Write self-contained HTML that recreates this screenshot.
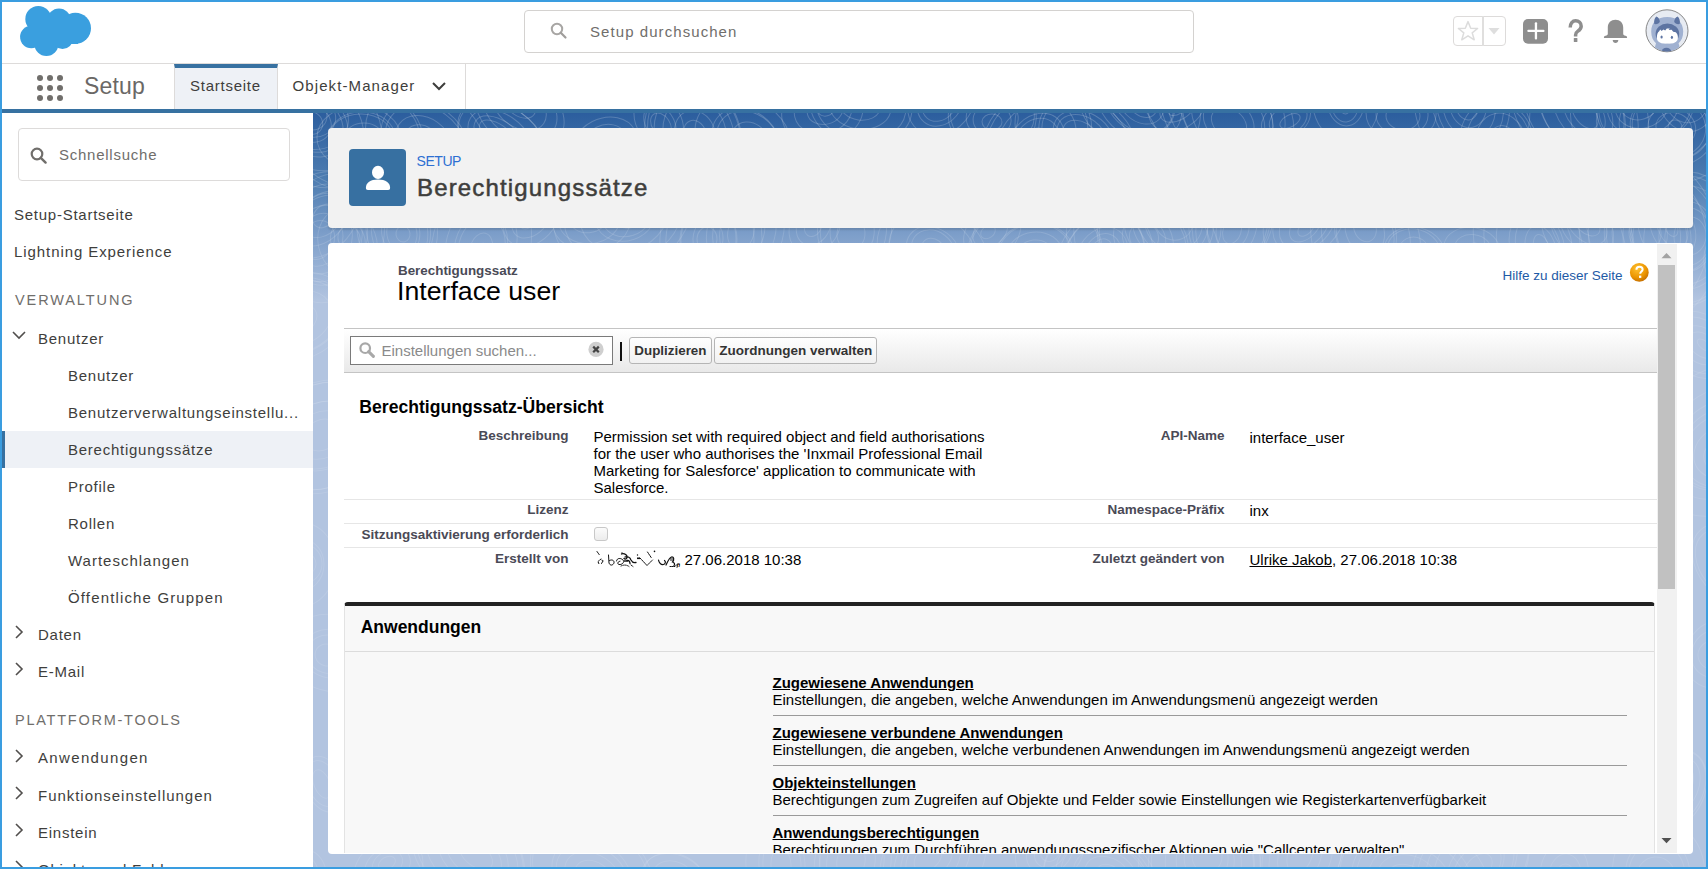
<!DOCTYPE html>
<html><head><meta charset="utf-8">
<style>
*{box-sizing:border-box;margin:0;padding:0}
html,body{width:1708px;height:869px;overflow:hidden;background:#3a9de0;font-family:"Liberation Sans",sans-serif}
.abs{position:absolute}
#hdr{position:absolute;left:2px;top:2px;width:1704px;height:61px;background:#fff}
#hline{position:absolute;left:2px;top:63px;width:1704px;height:1px;background:#dddbda}
#search{position:absolute;left:522px;top:8px;width:670px;height:43px;border:1px solid #d4d2d0;border-radius:4px;background:#fff}
#nav{position:absolute;left:2px;top:64px;width:1704px;height:45px;background:#fff}
#navline{position:absolute;left:2px;top:109px;width:1704px;height:4px;background:#3771a1}
#side{position:absolute;left:2px;top:113px;width:311px;height:754px;background:#fff;overflow:hidden}
#bg{position:absolute;left:313px;top:113px;width:1393px;height:754px;background:linear-gradient(180deg,rgb(44,94,158) 0px,rgb(78,125,177) 67px,rgb(126,159,202) 123px,rgb(178,196,224) 187px,rgb(178,196,224) 760px);overflow:hidden}
.sf{position:absolute;white-space:nowrap;color:#3e3e3c;font-size:15px;line-height:18px}
.si{position:absolute;white-space:nowrap;color:#3e3e3c;font-size:15px;line-height:18px;letter-spacing:0.75px}
.sh{position:absolute;white-space:nowrap;color:#706e6b;font-size:14.5px;line-height:18px;letter-spacing:1.9px}
.chev{position:absolute;width:9px;height:9px;border-right:1.6px solid #514f4d;border-bottom:1.6px solid #514f4d}
.t{position:absolute;white-space:nowrap;line-height:1}
</style></head><body>
<div id="hdr">
 <svg class="abs" style="left:16px;top:2px" width="74" height="52" viewBox="0 0 74 52">
  <g fill="#3a9fdf">
   <circle cx="20.3" cy="15" r="13"/>
   <circle cx="41" cy="16" r="11.5"/>
   <circle cx="57.4" cy="24.3" r="15.6"/>
   <circle cx="13.3" cy="33" r="11.2"/>
   <circle cx="28.4" cy="40" r="12"/>
   <circle cx="44.5" cy="34.5" r="10.5"/>
   <rect x="14" y="14" width="46" height="26"/>
  </g>
 </svg>
 <div id="search">
  <svg class="abs" style="left:25px;top:11px" width="18" height="18" viewBox="0 0 18 18"><circle cx="7" cy="7" r="5.2" fill="none" stroke="#a8a6a4" stroke-width="2"/><line x1="10.8" y1="10.8" x2="15.5" y2="15.5" stroke="#a09e9c" stroke-width="2.2" stroke-linecap="round"/></svg>
  <div class="sf" style="left:65px;top:12px;color:#706e6b;letter-spacing:1.07px">Setup durchsuchen</div>
 </div>

 <div class="abs" style="left:1451px;top:14px;width:53px;height:30px;border:1px solid #dddbda;border-radius:4px"></div>
 <div class="abs" style="left:1480px;top:14px;width:2px;height:30px;background:#e0dfde"></div>
 <svg class="abs" style="left:1454px;top:16px" width="24" height="26" viewBox="0 0 24 26"><polygon points="12,3.6 14.7,10.2 21.6,10.5 16.2,14.8 18.2,21.8 12,17.8 5.8,21.8 7.8,14.8 2.4,10.5 9.3,10.2" fill="none" stroke="#dcdcdc" stroke-width="1.5" stroke-linejoin="round"/></svg>
 <svg class="abs" style="left:1485px;top:23px" width="14" height="10" viewBox="0 0 14 10"><polygon points="1.5,3 12.5,3 7,9.5" fill="#dedede"/></svg>
 <svg class="abs" style="left:1521px;top:17px" width="25" height="25" viewBox="0 0 25 25"><rect x="0" y="0" width="25" height="24.8" rx="5" fill="#8e8e8e"/><rect x="4.3" y="10.8" width="17.2" height="2.3" rx="1" fill="#fff"/><rect x="11.8" y="3.3" width="2.3" height="17.2" rx="1" fill="#fff"/></svg>
 <svg class="abs" style="left:1563px;top:17px" width="22" height="25" viewBox="0 0 22 25"><path d="M5.2 8.4 C5.2 4.4 7.6 1.8 10.6 1.8 C13.8 1.8 16.2 4.2 16.2 7.2 C16.2 10 14.4 11.2 12.6 12.4 C11.2 13.3 10.6 14.2 10.6 16 L10.6 17.4" fill="none" stroke="#8e8e8e" stroke-width="3.5"/><rect x="8.8" y="19.1" width="3.6" height="3.9" rx="0.5" fill="#8e8e8e"/></svg>
 <svg class="abs" style="left:1601px;top:17px" width="26" height="26" viewBox="0 0 26 26"><path d="M12.5 0.8 C8 0.8 4.8 3.8 4.8 8.6 L4.8 15 C4.8 15.8 4 16.3 2.6 16.8 C1.2 17.2 0.9 17.8 0.9 18.4 C0.9 18.9 1.3 19.1 1.8 19.1 L23.2 19.1 C23.7 19.1 24.1 18.9 24.1 18.4 C24.1 17.8 23.8 17.2 22.4 16.8 C21 16.3 20.2 15.8 20.2 15 L20.2 8.6 C20.2 3.8 17 0.8 12.5 0.8 Z" fill="#8e8e8e"/><path d="M9.7 20.9 L15.3 20.9 C15.3 22.6 14 23.9 12.5 23.9 C11 23.9 9.7 22.6 9.7 20.9 Z" fill="#8e8e8e"/></svg>
 <svg class="abs" style="left:1638px;top:2px" width="56" height="56" viewBox="0 0 56 56">
  <defs><clipPath id="avc"><circle cx="27" cy="26.8" r="20.6"/></clipPath></defs>
  <circle cx="27" cy="26.8" r="21" fill="#e7ebf2" stroke="#7a7a7a" stroke-width="0.9"/>
  <g clip-path="url(#avc)">
   <path d="M11.2 27.5 C11.2 18 17.5 13 27.2 13 C36.9 13 43.2 18 43.2 27.5 C43.2 33 41.5 36.5 38.6 39.2 L41.5 50 L13 50 L16 39.2 C13 36.5 11.2 33 11.2 27.5 Z" fill="#a0b1d1"/>
   <path d="M14.2 19.8 C13.8 16.5 14.6 13.6 16.4 12.4 C18.4 13.2 19.8 15.4 19.8 17.8 C19.2 19.6 16 20.8 14.2 19.8 Z" fill="#5d74a2"/>
   <path d="M39.8 19.8 C40.2 16.5 39.4 13.6 37.6 12.4 C35.6 13.2 34.2 15.4 34.2 17.8 C34.8 19.6 38 20.8 39.8 19.8 Z" fill="#5d74a2"/>
   <ellipse cx="27.4" cy="29.8" rx="11.8" ry="10.2" fill="#5d74a2"/>
   <path d="M16.9 34.2 C16.8 30.5 17.6 28.2 19.2 27.2 L20.2 25.6 L21.6 27 L23.4 25.4 L25.2 26.4 L26.8 24.6 L29.8 24.4 L28.6 26 L31.6 25.8 L33.2 27.8 L35.8 28.2 C37.4 29.6 38 31.8 37.9 34.2 C37.6 38.2 33.6 39.8 27.4 39.8 C21.2 39.8 17.1 38.2 16.9 34.2 Z" fill="#fff"/>
   <ellipse cx="21.6" cy="33" rx="1.1" ry="1.6" fill="#5d74a2"/>
   <ellipse cx="31.9" cy="33.3" rx="1.1" ry="1.6" fill="#5d74a2"/>
   <ellipse cx="26.4" cy="48" rx="5" ry="4.2" fill="#5d74a2"/>
  </g>
 </svg>
</div>
<div id="hline"></div>
<div id="nav">
 <svg class="abs" style="left:35px;top:10px" width="28" height="28" viewBox="0 0 28 28"><g fill="#706e6b">
  <circle cx="3" cy="4" r="3"/><circle cx="13" cy="4" r="3"/><circle cx="23" cy="4" r="3"/>
  <circle cx="3" cy="14" r="3"/><circle cx="13" cy="14" r="3"/><circle cx="23" cy="14" r="3"/>
  <circle cx="3" cy="24" r="3"/><circle cx="13" cy="24" r="3"/><circle cx="23" cy="24" r="3"/></g></svg>
 <div class="sf" style="left:82px;top:8px;font-size:23px;line-height:28px;color:#6a6866;letter-spacing:0.2px">Setup</div>
 <div class="abs" style="left:172px;top:0;width:104px;height:45px;background:#eef1f6;border-top:4px solid #3771a1;border-left:1px solid #dddbda;border-right:1px solid #dddbda"></div>
 <div class="si" style="left:188px;top:13px">Startseite</div>
 <div class="si" style="left:290.5px;top:13px;letter-spacing:1.1px">Objekt-Manager</div>
 <svg class="abs" style="left:429px;top:16px" width="16" height="12" viewBox="0 0 16 12"><polyline points="2,3 8,9 14,3" fill="none" stroke="#3e3e3c" stroke-width="2"/></svg>
 <div class="abs" style="left:463px;top:0;width:1px;height:45px;background:#dddbda"></div>
</div>
<div id="navline"></div>
<div id="side">
<div class="abs" style="left:16px;top:15px;width:272px;height:53px;border:1px solid #dddbda;border-radius:4px"></div>
<svg class="abs" style="left:28px;top:34px" width="18" height="18" viewBox="0 0 18 18"><circle cx="7" cy="7" r="5.3" fill="none" stroke="#706e6b" stroke-width="2.2"/><line x1="10.8" y1="10.8" x2="15.6" y2="15.6" stroke="#706e6b" stroke-width="2.4" stroke-linecap="round"/></svg>
<div class="si" style="left:57px;top:32.8px;color:#706e6b">Schnellsuche</div>
<div class="si" style="left:12px;top:92.8px">Setup-Startseite</div>
<div class="si" style="left:12px;top:129.8px;letter-spacing:0.92px">Lightning Experience</div>
<div class="sh" style="left:13px;top:178.0px">VERWALTUNG</div>
<div class="abs" style="left:0;top:318px;width:311px;height:37px;background:#eef1f6"></div>
<div class="abs" style="left:0;top:318px;width:3px;height:37px;background:#3771a1"></div>
<svg class="abs" style="left:9px;top:217px" width="16" height="12" viewBox="0 0 16 12"><polyline points="2,2 8,8 14,2" fill="none" stroke="#514f4d" stroke-width="1.6"/></svg>
<div class="si" style="left:36px;top:216.8px">Benutzer</div>
<div class="si" style="left:66px;top:253.8px">Benutzer</div>
<div class="si" style="left:66px;top:290.8px">Benutzerverwaltungseinstellu...</div>
<div class="si" style="left:66px;top:327.8px">Berechtigungssätze</div>
<div class="si" style="left:66px;top:364.8px">Profile</div>
<div class="si" style="left:66px;top:401.8px">Rollen</div>
<div class="si" style="left:66px;top:438.8px;letter-spacing:1.0px">Warteschlangen</div>
<div class="si" style="left:66px;top:475.8px;letter-spacing:1.15px">Öffentliche Gruppen</div>
<svg class="abs" style="left:11px;top:511.0px" width="12" height="16" viewBox="0 0 12 16"><polyline points="3,2 9,8 3,14" fill="none" stroke="#514f4d" stroke-width="1.6"/></svg>
<div class="si" style="left:36px;top:512.8px">Daten</div>
<svg class="abs" style="left:11px;top:548.0px" width="12" height="16" viewBox="0 0 12 16"><polyline points="3,2 9,8 3,14" fill="none" stroke="#514f4d" stroke-width="1.6"/></svg>
<div class="si" style="left:36px;top:549.8px">E-Mail</div>
<svg class="abs" style="left:11px;top:634.5px" width="12" height="16" viewBox="0 0 12 16"><polyline points="3,2 9,8 3,14" fill="none" stroke="#514f4d" stroke-width="1.6"/></svg>
<div class="si" style="left:36px;top:636.3px;letter-spacing:1.35px">Anwendungen</div>
<svg class="abs" style="left:11px;top:672.0px" width="12" height="16" viewBox="0 0 12 16"><polyline points="3,2 9,8 3,14" fill="none" stroke="#514f4d" stroke-width="1.6"/></svg>
<div class="si" style="left:36px;top:673.8px;letter-spacing:0.97px">Funktionseinstellungen</div>
<svg class="abs" style="left:11px;top:709.0px" width="12" height="16" viewBox="0 0 12 16"><polyline points="3,2 9,8 3,14" fill="none" stroke="#514f4d" stroke-width="1.6"/></svg>
<div class="si" style="left:36px;top:710.8px">Einstein</div>
<svg class="abs" style="left:11px;top:746.0px" width="12" height="16" viewBox="0 0 12 16"><polyline points="3,2 9,8 3,14" fill="none" stroke="#514f4d" stroke-width="1.6"/></svg>
<div class="si" style="left:36px;top:747.8px">Objekte und Felder</div>
<div class="sh" style="left:13px;top:598.0px;letter-spacing:1.75px">PLATTFORM-TOOLS</div>
</div>
<div id="bg"><svg class="abs" style="left:0;top:0;-webkit-mask-image:linear-gradient(#000 0px,rgba(0,0,0,0.5) 190px)" width="1393" height="754" viewBox="0 0 1393 754"><g fill="none" stroke="rgba(255,255,255,0.2)" stroke-width="1"><ellipse cx="-2" cy="10" rx="12" ry="11" transform="rotate(34 -2 10)"/><ellipse cx="-1" cy="10" rx="20" ry="18" transform="rotate(34 -2 10)"/><ellipse cx="1" cy="10" rx="31" ry="26" transform="rotate(34 -2 10)"/><ellipse cx="2" cy="10" rx="35" ry="30" transform="rotate(34 -2 10)"/><ellipse cx="3" cy="10" rx="51" ry="42" transform="rotate(34 -2 10)"/><ellipse cx="4" cy="10" rx="70" ry="57" transform="rotate(34 -2 10)"/><ellipse cx="5" cy="127" rx="20" ry="16" transform="rotate(111 5 127)"/><ellipse cx="4" cy="125" rx="27" ry="22" transform="rotate(111 5 127)"/><ellipse cx="3" cy="123" rx="35" ry="29" transform="rotate(111 5 127)"/><ellipse cx="1" cy="121" rx="44" ry="36" transform="rotate(111 5 127)"/><ellipse cx="-0" cy="119" rx="48" ry="39" transform="rotate(111 5 127)"/><ellipse cx="-1" cy="117" rx="66" ry="53" transform="rotate(111 5 127)"/><ellipse cx="53" cy="23" rx="9" ry="6" transform="rotate(1 53 23)"/><ellipse cx="51" cy="24" rx="19" ry="14" transform="rotate(1 53 23)"/><ellipse cx="49" cy="24" rx="33" ry="25" transform="rotate(1 53 23)"/><ellipse cx="48" cy="25" rx="32" ry="24" transform="rotate(1 53 23)"/><ellipse cx="46" cy="25" rx="42" ry="32" transform="rotate(1 53 23)"/><ellipse cx="44" cy="26" rx="63" ry="49" transform="rotate(1 53 23)"/><ellipse cx="43" cy="27" rx="67" ry="52" transform="rotate(1 53 23)"/><ellipse cx="36" cy="125" rx="12" ry="11" transform="rotate(70 36 125)"/><ellipse cx="38" cy="127" rx="20" ry="17" transform="rotate(70 36 125)"/><ellipse cx="40" cy="128" rx="35" ry="29" transform="rotate(70 36 125)"/><ellipse cx="109" cy="29" rx="12" ry="9" transform="rotate(36 109 29)"/><ellipse cx="109" cy="28" rx="19" ry="15" transform="rotate(36 109 29)"/><ellipse cx="110" cy="28" rx="30" ry="24" transform="rotate(36 109 29)"/><ellipse cx="111" cy="27" rx="47" ry="37" transform="rotate(36 109 29)"/><ellipse cx="112" cy="27" rx="43" ry="34" transform="rotate(36 109 29)"/><ellipse cx="112" cy="26" rx="65" ry="51" transform="rotate(36 109 29)"/><ellipse cx="90" cy="121" rx="8" ry="7" transform="rotate(81 90 121)"/><ellipse cx="89" cy="122" rx="19" ry="15" transform="rotate(81 90 121)"/><ellipse cx="88" cy="123" rx="24" ry="19" transform="rotate(81 90 121)"/><ellipse cx="87" cy="124" rx="36" ry="28" transform="rotate(81 90 121)"/><ellipse cx="85" cy="125" rx="41" ry="32" transform="rotate(81 90 121)"/><ellipse cx="84" cy="126" rx="50" ry="40" transform="rotate(81 90 121)"/><ellipse cx="184" cy="21" rx="20" ry="10" transform="rotate(34 184 21)"/><ellipse cx="186" cy="22" rx="27" ry="16" transform="rotate(34 184 21)"/><ellipse cx="188" cy="22" rx="35" ry="23" transform="rotate(34 184 21)"/><ellipse cx="190" cy="22" rx="48" ry="32" transform="rotate(34 184 21)"/><ellipse cx="192" cy="23" rx="48" ry="33" transform="rotate(34 184 21)"/><ellipse cx="169" cy="137" rx="7" ry="4" transform="rotate(105 169 137)"/><ellipse cx="168" cy="138" rx="16" ry="11" transform="rotate(105 169 137)"/><ellipse cx="167" cy="138" rx="31" ry="23" transform="rotate(105 169 137)"/><ellipse cx="166" cy="139" rx="35" ry="26" transform="rotate(105 169 137)"/><ellipse cx="165" cy="139" rx="47" ry="35" transform="rotate(105 169 137)"/><ellipse cx="164" cy="139" rx="64" ry="49" transform="rotate(105 169 137)"/><ellipse cx="207" cy="-8" rx="17" ry="11" transform="rotate(34 207 -8)"/><ellipse cx="208" cy="-6" rx="29" ry="20" transform="rotate(34 207 -8)"/><ellipse cx="209" cy="-5" rx="40" ry="29" transform="rotate(34 207 -8)"/><ellipse cx="210" cy="-3" rx="48" ry="35" transform="rotate(34 207 -8)"/><ellipse cx="217" cy="105" rx="13" ry="8" transform="rotate(133 217 105)"/><ellipse cx="216" cy="104" rx="23" ry="16" transform="rotate(133 217 105)"/><ellipse cx="216" cy="104" rx="32" ry="24" transform="rotate(133 217 105)"/><ellipse cx="292" cy="29" rx="9" ry="7" transform="rotate(153 292 29)"/><ellipse cx="293" cy="28" rx="17" ry="14" transform="rotate(153 292 29)"/><ellipse cx="293" cy="27" rx="23" ry="19" transform="rotate(153 292 29)"/><ellipse cx="294" cy="26" rx="34" ry="27" transform="rotate(153 292 29)"/><ellipse cx="273" cy="103" rx="10" ry="8" transform="rotate(175 273 103)"/><ellipse cx="271" cy="101" rx="19" ry="15" transform="rotate(175 273 103)"/><ellipse cx="270" cy="100" rx="31" ry="25" transform="rotate(175 273 103)"/><ellipse cx="268" cy="98" rx="39" ry="31" transform="rotate(175 273 103)"/><ellipse cx="348" cy="12" rx="13" ry="9" transform="rotate(56 348 12)"/><ellipse cx="346" cy="12" rx="20" ry="14" transform="rotate(56 348 12)"/><ellipse cx="344" cy="12" rx="30" ry="22" transform="rotate(56 348 12)"/><ellipse cx="315" cy="103" rx="14" ry="12" transform="rotate(162 315 103)"/><ellipse cx="316" cy="104" rx="25" ry="21" transform="rotate(162 315 103)"/><ellipse cx="317" cy="105" rx="31" ry="26" transform="rotate(162 315 103)"/><ellipse cx="318" cy="106" rx="45" ry="37" transform="rotate(162 315 103)"/><ellipse cx="319" cy="107" rx="60" ry="49" transform="rotate(162 315 103)"/><ellipse cx="320" cy="107" rx="70" ry="57" transform="rotate(162 315 103)"/><ellipse cx="382" cy="21" rx="14" ry="11" transform="rotate(69 382 21)"/><ellipse cx="382" cy="21" rx="24" ry="20" transform="rotate(69 382 21)"/><ellipse cx="382" cy="21" rx="38" ry="31" transform="rotate(69 382 21)"/><ellipse cx="383" cy="22" rx="48" ry="39" transform="rotate(69 382 21)"/><ellipse cx="383" cy="22" rx="57" ry="45" transform="rotate(69 382 21)"/><ellipse cx="383" cy="23" rx="59" ry="47" transform="rotate(69 382 21)"/><ellipse cx="394" cy="126" rx="12" ry="10" transform="rotate(93 394 126)"/><ellipse cx="394" cy="125" rx="20" ry="15" transform="rotate(93 394 126)"/><ellipse cx="395" cy="125" rx="36" ry="28" transform="rotate(93 394 126)"/><ellipse cx="395" cy="124" rx="35" ry="28" transform="rotate(93 394 126)"/><ellipse cx="395" cy="123" rx="56" ry="44" transform="rotate(93 394 126)"/><ellipse cx="395" cy="122" rx="64" ry="51" transform="rotate(93 394 126)"/><ellipse cx="439" cy="25" rx="10" ry="9" transform="rotate(36 439 25)"/><ellipse cx="438" cy="27" rx="19" ry="16" transform="rotate(36 439 25)"/><ellipse cx="437" cy="29" rx="33" ry="27" transform="rotate(36 439 25)"/><ellipse cx="435" cy="30" rx="36" ry="29" transform="rotate(36 439 25)"/><ellipse cx="434" cy="32" rx="52" ry="42" transform="rotate(36 439 25)"/><ellipse cx="428" cy="119" rx="18" ry="13" transform="rotate(105 428 119)"/><ellipse cx="427" cy="118" rx="30" ry="22" transform="rotate(105 428 119)"/><ellipse cx="426" cy="116" rx="41" ry="31" transform="rotate(105 428 119)"/><ellipse cx="426" cy="115" rx="50" ry="38" transform="rotate(105 428 119)"/><ellipse cx="513" cy="-3" rx="8" ry="6" transform="rotate(167 513 -3)"/><ellipse cx="514" cy="-3" rx="18" ry="14" transform="rotate(167 513 -3)"/><ellipse cx="516" cy="-3" rx="29" ry="23" transform="rotate(167 513 -3)"/><ellipse cx="517" cy="-4" rx="41" ry="32" transform="rotate(167 513 -3)"/><ellipse cx="500" cy="114" rx="10" ry="8" transform="rotate(122 500 114)"/><ellipse cx="499" cy="114" rx="20" ry="16" transform="rotate(122 500 114)"/><ellipse cx="498" cy="113" rx="30" ry="24" transform="rotate(122 500 114)"/><ellipse cx="546" cy="-6" rx="9" ry="5" transform="rotate(8 546 -6)"/><ellipse cx="547" cy="-7" rx="20" ry="14" transform="rotate(8 546 -6)"/><ellipse cx="547" cy="-7" rx="31" ry="23" transform="rotate(8 546 -6)"/><ellipse cx="548" cy="-7" rx="45" ry="34" transform="rotate(8 546 -6)"/><ellipse cx="548" cy="-7" rx="51" ry="39" transform="rotate(8 546 -6)"/><ellipse cx="538" cy="121" rx="16" ry="14" transform="rotate(96 538 121)"/><ellipse cx="536" cy="120" rx="26" ry="22" transform="rotate(96 538 121)"/><ellipse cx="534" cy="119" rx="39" ry="33" transform="rotate(96 538 121)"/><ellipse cx="532" cy="118" rx="45" ry="37" transform="rotate(96 538 121)"/><ellipse cx="625" cy="-8" rx="7" ry="7" transform="rotate(130 625 -8)"/><ellipse cx="623" cy="-8" rx="19" ry="16" transform="rotate(130 625 -8)"/><ellipse cx="622" cy="-8" rx="25" ry="21" transform="rotate(130 625 -8)"/><ellipse cx="620" cy="-8" rx="37" ry="31" transform="rotate(130 625 -8)"/><ellipse cx="620" cy="136" rx="12" ry="10" transform="rotate(37 620 136)"/><ellipse cx="621" cy="137" rx="23" ry="19" transform="rotate(37 620 136)"/><ellipse cx="622" cy="138" rx="29" ry="23" transform="rotate(37 620 136)"/><ellipse cx="623" cy="140" rx="47" ry="38" transform="rotate(37 620 136)"/><ellipse cx="624" cy="141" rx="60" ry="48" transform="rotate(37 620 136)"/><ellipse cx="679" cy="9" rx="10" ry="8" transform="rotate(3 679 9)"/><ellipse cx="679" cy="7" rx="19" ry="16" transform="rotate(3 679 9)"/><ellipse cx="679" cy="5" rx="26" ry="22" transform="rotate(3 679 9)"/><ellipse cx="679" cy="4" rx="44" ry="36" transform="rotate(3 679 9)"/><ellipse cx="679" cy="2" rx="42" ry="34" transform="rotate(3 679 9)"/><ellipse cx="675" cy="119" rx="8" ry="6" transform="rotate(142 675 119)"/><ellipse cx="673" cy="118" rx="19" ry="14" transform="rotate(142 675 119)"/><ellipse cx="672" cy="116" rx="31" ry="24" transform="rotate(142 675 119)"/><ellipse cx="723" cy="28" rx="14" ry="12" transform="rotate(136 723 28)"/><ellipse cx="722" cy="28" rx="24" ry="20" transform="rotate(136 723 28)"/><ellipse cx="722" cy="28" rx="30" ry="24" transform="rotate(136 723 28)"/><ellipse cx="722" cy="28" rx="43" ry="35" transform="rotate(136 723 28)"/><ellipse cx="722" cy="28" rx="60" ry="49" transform="rotate(136 723 28)"/><ellipse cx="721" cy="29" rx="56" ry="45" transform="rotate(136 723 28)"/><ellipse cx="722" cy="143" rx="9" ry="8" transform="rotate(174 722 143)"/><ellipse cx="722" cy="143" rx="19" ry="16" transform="rotate(174 722 143)"/><ellipse cx="722" cy="144" rx="28" ry="23" transform="rotate(174 722 143)"/><ellipse cx="722" cy="144" rx="39" ry="32" transform="rotate(174 722 143)"/><ellipse cx="722" cy="144" rx="37" ry="31" transform="rotate(174 722 143)"/><ellipse cx="722" cy="144" rx="68" ry="56" transform="rotate(174 722 143)"/><ellipse cx="722" cy="145" rx="66" ry="54" transform="rotate(174 722 143)"/><ellipse cx="766" cy="21" rx="8" ry="4" transform="rotate(30 766 21)"/><ellipse cx="768" cy="21" rx="19" ry="13" transform="rotate(30 766 21)"/><ellipse cx="769" cy="21" rx="26" ry="19" transform="rotate(30 766 21)"/><ellipse cx="771" cy="21" rx="32" ry="24" transform="rotate(30 766 21)"/><ellipse cx="773" cy="20" rx="46" ry="35" transform="rotate(30 766 21)"/><ellipse cx="775" cy="20" rx="51" ry="39" transform="rotate(30 766 21)"/><ellipse cx="776" cy="20" rx="77" ry="59" transform="rotate(30 766 21)"/><ellipse cx="787" cy="141" rx="10" ry="6" transform="rotate(111 787 141)"/><ellipse cx="789" cy="140" rx="18" ry="12" transform="rotate(111 787 141)"/><ellipse cx="791" cy="138" rx="26" ry="19" transform="rotate(111 787 141)"/><ellipse cx="793" cy="137" rx="35" ry="26" transform="rotate(111 787 141)"/><ellipse cx="794" cy="135" rx="52" ry="40" transform="rotate(111 787 141)"/><ellipse cx="796" cy="134" rx="53" ry="41" transform="rotate(111 787 141)"/><ellipse cx="798" cy="133" rx="63" ry="48" transform="rotate(111 787 141)"/><ellipse cx="830" cy="-10" rx="8" ry="6" transform="rotate(45 830 -10)"/><ellipse cx="829" cy="-10" rx="17" ry="13" transform="rotate(45 830 -10)"/><ellipse cx="827" cy="-10" rx="26" ry="20" transform="rotate(45 830 -10)"/><ellipse cx="826" cy="-10" rx="37" ry="29" transform="rotate(45 830 -10)"/><ellipse cx="825" cy="-10" rx="39" ry="31" transform="rotate(45 830 -10)"/><ellipse cx="824" cy="-10" rx="48" ry="38" transform="rotate(45 830 -10)"/><ellipse cx="823" cy="-10" rx="69" ry="55" transform="rotate(45 830 -10)"/><ellipse cx="831" cy="124" rx="15" ry="14" transform="rotate(42 831 124)"/><ellipse cx="832" cy="125" rx="23" ry="20" transform="rotate(42 831 124)"/><ellipse cx="832" cy="126" rx="32" ry="27" transform="rotate(42 831 124)"/><ellipse cx="833" cy="128" rx="49" ry="41" transform="rotate(42 831 124)"/><ellipse cx="834" cy="129" rx="47" ry="39" transform="rotate(42 831 124)"/><ellipse cx="835" cy="130" rx="75" ry="61" transform="rotate(42 831 124)"/><ellipse cx="836" cy="131" rx="83" ry="68" transform="rotate(42 831 124)"/><ellipse cx="865" cy="-4" rx="10" ry="5" transform="rotate(150 865 -4)"/><ellipse cx="865" cy="-3" rx="19" ry="12" transform="rotate(150 865 -4)"/><ellipse cx="865" cy="-2" rx="30" ry="22" transform="rotate(150 865 -4)"/><ellipse cx="861" cy="109" rx="19" ry="18" transform="rotate(21 861 109)"/><ellipse cx="861" cy="110" rx="29" ry="27" transform="rotate(21 861 109)"/><ellipse cx="861" cy="111" rx="35" ry="31" transform="rotate(21 861 109)"/><ellipse cx="861" cy="112" rx="41" ry="36" transform="rotate(21 861 109)"/><ellipse cx="861" cy="113" rx="49" ry="43" transform="rotate(21 861 109)"/><ellipse cx="916" cy="10" rx="19" ry="14" transform="rotate(34 916 10)"/><ellipse cx="915" cy="9" rx="27" ry="21" transform="rotate(34 916 10)"/><ellipse cx="913" cy="7" rx="39" ry="30" transform="rotate(34 916 10)"/><ellipse cx="912" cy="6" rx="48" ry="38" transform="rotate(34 916 10)"/><ellipse cx="910" cy="5" rx="49" ry="38" transform="rotate(34 916 10)"/><ellipse cx="909" cy="3" rx="71" ry="55" transform="rotate(34 916 10)"/><ellipse cx="907" cy="2" rx="63" ry="49" transform="rotate(34 916 10)"/><ellipse cx="919" cy="118" rx="13" ry="9" transform="rotate(108 919 118)"/><ellipse cx="917" cy="118" rx="21" ry="16" transform="rotate(108 919 118)"/><ellipse cx="915" cy="119" rx="32" ry="24" transform="rotate(108 919 118)"/><ellipse cx="913" cy="120" rx="45" ry="35" transform="rotate(108 919 118)"/><ellipse cx="911" cy="121" rx="49" ry="38" transform="rotate(108 919 118)"/><ellipse cx="909" cy="122" rx="53" ry="41" transform="rotate(108 919 118)"/><ellipse cx="977" cy="8" rx="11" ry="6" transform="rotate(152 977 8)"/><ellipse cx="978" cy="10" rx="20" ry="14" transform="rotate(152 977 8)"/><ellipse cx="980" cy="11" rx="26" ry="18" transform="rotate(152 977 8)"/><ellipse cx="993" cy="115" rx="10" ry="6" transform="rotate(134 993 115)"/><ellipse cx="992" cy="117" rx="19" ry="12" transform="rotate(134 993 115)"/><ellipse cx="991" cy="119" rx="29" ry="21" transform="rotate(134 993 115)"/><ellipse cx="989" cy="121" rx="36" ry="27" transform="rotate(134 993 115)"/><ellipse cx="988" cy="122" rx="47" ry="35" transform="rotate(134 993 115)"/><ellipse cx="1032" cy="-6" rx="7" ry="5" transform="rotate(84 1032 -6)"/><ellipse cx="1030" cy="-6" rx="17" ry="13" transform="rotate(84 1032 -6)"/><ellipse cx="1028" cy="-7" rx="23" ry="18" transform="rotate(84 1032 -6)"/><ellipse cx="1026" cy="-7" rx="42" ry="33" transform="rotate(84 1032 -6)"/><ellipse cx="1052" cy="115" rx="14" ry="11" transform="rotate(70 1052 115)"/><ellipse cx="1054" cy="116" rx="25" ry="19" transform="rotate(70 1052 115)"/><ellipse cx="1056" cy="116" rx="38" ry="30" transform="rotate(70 1052 115)"/><ellipse cx="1058" cy="117" rx="35" ry="28" transform="rotate(70 1052 115)"/><ellipse cx="1060" cy="117" rx="54" ry="43" transform="rotate(70 1052 115)"/><ellipse cx="1062" cy="118" rx="67" ry="53" transform="rotate(70 1052 115)"/><ellipse cx="1090" cy="3" rx="17" ry="14" transform="rotate(2 1090 3)"/><ellipse cx="1089" cy="2" rx="26" ry="21" transform="rotate(2 1090 3)"/><ellipse cx="1088" cy="1" rx="35" ry="28" transform="rotate(2 1090 3)"/><ellipse cx="1101" cy="138" rx="15" ry="14" transform="rotate(14 1101 138)"/><ellipse cx="1101" cy="139" rx="27" ry="23" transform="rotate(14 1101 138)"/><ellipse cx="1102" cy="140" rx="31" ry="26" transform="rotate(14 1101 138)"/><ellipse cx="1154" cy="-7" rx="14" ry="11" transform="rotate(77 1154 -7)"/><ellipse cx="1154" cy="-8" rx="22" ry="18" transform="rotate(77 1154 -7)"/><ellipse cx="1154" cy="-9" rx="33" ry="26" transform="rotate(77 1154 -7)"/><ellipse cx="1154" cy="-10" rx="42" ry="33" transform="rotate(77 1154 -7)"/><ellipse cx="1154" cy="-11" rx="47" ry="38" transform="rotate(77 1154 -7)"/><ellipse cx="1154" cy="-12" rx="72" ry="57" transform="rotate(77 1154 -7)"/><ellipse cx="1162" cy="134" rx="6" ry="4" transform="rotate(8 1162 134)"/><ellipse cx="1160" cy="135" rx="18" ry="13" transform="rotate(8 1162 134)"/><ellipse cx="1159" cy="136" rx="28" ry="21" transform="rotate(8 1162 134)"/><ellipse cx="1192" cy="29" rx="7" ry="7" transform="rotate(77 1192 29)"/><ellipse cx="1192" cy="31" rx="17" ry="14" transform="rotate(77 1192 29)"/><ellipse cx="1192" cy="33" rx="30" ry="25" transform="rotate(77 1192 29)"/><ellipse cx="1192" cy="35" rx="39" ry="32" transform="rotate(77 1192 29)"/><ellipse cx="1192" cy="37" rx="44" ry="37" transform="rotate(77 1192 29)"/><ellipse cx="1229" cy="137" rx="16" ry="8" transform="rotate(75 1229 137)"/><ellipse cx="1228" cy="138" rx="24" ry="15" transform="rotate(75 1229 137)"/><ellipse cx="1226" cy="140" rx="34" ry="22" transform="rotate(75 1229 137)"/><ellipse cx="1225" cy="141" rx="39" ry="27" transform="rotate(75 1229 137)"/><ellipse cx="1223" cy="143" rx="52" ry="37" transform="rotate(75 1229 137)"/><ellipse cx="1222" cy="144" rx="66" ry="48" transform="rotate(75 1229 137)"/><ellipse cx="1220" cy="145" rx="77" ry="57" transform="rotate(75 1229 137)"/><ellipse cx="1272" cy="1" rx="17" ry="10" transform="rotate(52 1272 1)"/><ellipse cx="1271" cy="1" rx="26" ry="17" transform="rotate(52 1272 1)"/><ellipse cx="1269" cy="1" rx="36" ry="25" transform="rotate(52 1272 1)"/><ellipse cx="1268" cy="1" rx="51" ry="37" transform="rotate(52 1272 1)"/><ellipse cx="1266" cy="1" rx="51" ry="37" transform="rotate(52 1272 1)"/><ellipse cx="1265" cy="1" rx="68" ry="50" transform="rotate(52 1272 1)"/><ellipse cx="1263" cy="1" rx="81" ry="61" transform="rotate(52 1272 1)"/><ellipse cx="1273" cy="109" rx="17" ry="10" transform="rotate(45 1273 109)"/><ellipse cx="1275" cy="110" rx="24" ry="16" transform="rotate(45 1273 109)"/><ellipse cx="1277" cy="112" rx="31" ry="22" transform="rotate(45 1273 109)"/><ellipse cx="1279" cy="114" rx="42" ry="30" transform="rotate(45 1273 109)"/><ellipse cx="1281" cy="115" rx="53" ry="39" transform="rotate(45 1273 109)"/><ellipse cx="1325" cy="-10" rx="10" ry="9" transform="rotate(164 1325 -10)"/><ellipse cx="1324" cy="-11" rx="19" ry="16" transform="rotate(164 1325 -10)"/><ellipse cx="1322" cy="-13" rx="27" ry="23" transform="rotate(164 1325 -10)"/><ellipse cx="1321" cy="-14" rx="36" ry="30" transform="rotate(164 1325 -10)"/><ellipse cx="1320" cy="-15" rx="48" ry="39" transform="rotate(164 1325 -10)"/><ellipse cx="1318" cy="-16" rx="48" ry="39" transform="rotate(164 1325 -10)"/><ellipse cx="1317" cy="-17" rx="78" ry="63" transform="rotate(164 1325 -10)"/><ellipse cx="1332" cy="120" rx="18" ry="16" transform="rotate(80 1332 120)"/><ellipse cx="1333" cy="120" rx="25" ry="22" transform="rotate(80 1332 120)"/><ellipse cx="1334" cy="119" rx="40" ry="34" transform="rotate(80 1332 120)"/><ellipse cx="1335" cy="119" rx="48" ry="40" transform="rotate(80 1332 120)"/><ellipse cx="1336" cy="118" rx="52" ry="43" transform="rotate(80 1332 120)"/><ellipse cx="1337" cy="118" rx="72" ry="59" transform="rotate(80 1332 120)"/><ellipse cx="1338" cy="117" rx="85" ry="69" transform="rotate(80 1332 120)"/><ellipse cx="1362" cy="14" rx="7" ry="7" transform="rotate(14 1362 14)"/><ellipse cx="1361" cy="15" rx="18" ry="15" transform="rotate(14 1362 14)"/><ellipse cx="1359" cy="15" rx="24" ry="20" transform="rotate(14 1362 14)"/><ellipse cx="1357" cy="15" rx="40" ry="33" transform="rotate(14 1362 14)"/><ellipse cx="1356" cy="15" rx="37" ry="31" transform="rotate(14 1362 14)"/><ellipse cx="1354" cy="16" rx="48" ry="39" transform="rotate(14 1362 14)"/><ellipse cx="1352" cy="16" rx="69" ry="56" transform="rotate(14 1362 14)"/><ellipse cx="1358" cy="114" rx="10" ry="6" transform="rotate(64 1358 114)"/><ellipse cx="1359" cy="113" rx="21" ry="14" transform="rotate(64 1358 114)"/><ellipse cx="1360" cy="113" rx="30" ry="21" transform="rotate(64 1358 114)"/><ellipse cx="1361" cy="112" rx="45" ry="34" transform="rotate(64 1358 114)"/><ellipse cx="1362" cy="112" rx="57" ry="43" transform="rotate(64 1358 114)"/><ellipse cx="1447" cy="5" rx="12" ry="8" transform="rotate(174 1447 5)"/><ellipse cx="1447" cy="5" rx="24" ry="16" transform="rotate(174 1447 5)"/><ellipse cx="1448" cy="5" rx="27" ry="19" transform="rotate(174 1447 5)"/><ellipse cx="1449" cy="5" rx="44" ry="33" transform="rotate(174 1447 5)"/><ellipse cx="1450" cy="5" rx="52" ry="39" transform="rotate(174 1447 5)"/><ellipse cx="1442" cy="133" rx="17" ry="13" transform="rotate(151 1442 133)"/><ellipse cx="1442" cy="132" rx="29" ry="22" transform="rotate(151 1442 133)"/><ellipse cx="1442" cy="131" rx="34" ry="27" transform="rotate(151 1442 133)"/><ellipse cx="1443" cy="129" rx="38" ry="30" transform="rotate(151 1442 133)"/><ellipse cx="1443" cy="128" rx="55" ry="44" transform="rotate(151 1442 133)"/><ellipse cx="-1" cy="3" rx="15" ry="14" transform="rotate(12 -1 3)"/><ellipse cx="-0" cy="4" rx="23" ry="20" transform="rotate(12 -1 3)"/><ellipse cx="-0" cy="5" rx="36" ry="31" transform="rotate(12 -1 3)"/><ellipse cx="1373" cy="-17" rx="7" ry="7" transform="rotate(76 1373 -17)"/><ellipse cx="1373" cy="-17" rx="16" ry="14" transform="rotate(76 1373 -17)"/><ellipse cx="1374" cy="-17" rx="26" ry="22" transform="rotate(76 1373 -17)"/><ellipse cx="1375" cy="-17" rx="34" ry="28" transform="rotate(76 1373 -17)"/><ellipse cx="11" cy="103" rx="13" ry="10" transform="rotate(130 11 103)"/><ellipse cx="12" cy="105" rx="24" ry="19" transform="rotate(130 11 103)"/><ellipse cx="13" cy="107" rx="34" ry="26" transform="rotate(130 11 103)"/><ellipse cx="14" cy="108" rx="47" ry="37" transform="rotate(130 11 103)"/><ellipse cx="1377" cy="123" rx="19" ry="16" transform="rotate(94 1377 123)"/><ellipse cx="1378" cy="125" rx="29" ry="23" transform="rotate(94 1377 123)"/><ellipse cx="1378" cy="126" rx="35" ry="28" transform="rotate(94 1377 123)"/><ellipse cx="1379" cy="127" rx="52" ry="42" transform="rotate(94 1377 123)"/><ellipse cx="1380" cy="128" rx="67" ry="54" transform="rotate(94 1377 123)"/><ellipse cx="1381" cy="129" rx="64" ry="51" transform="rotate(94 1377 123)"/><ellipse cx="-17" cy="208" rx="13" ry="9" transform="rotate(159 -17 208)"/><ellipse cx="-18" cy="209" rx="21" ry="15" transform="rotate(159 -17 208)"/><ellipse cx="-18" cy="210" rx="37" ry="27" transform="rotate(159 -17 208)"/><ellipse cx="-18" cy="211" rx="48" ry="36" transform="rotate(159 -17 208)"/><ellipse cx="-18" cy="212" rx="56" ry="43" transform="rotate(159 -17 208)"/><ellipse cx="-18" cy="213" rx="49" ry="37" transform="rotate(159 -17 208)"/><ellipse cx="1391" cy="232" rx="8" ry="4" transform="rotate(39 1391 232)"/><ellipse cx="1390" cy="233" rx="16" ry="11" transform="rotate(39 1391 232)"/><ellipse cx="1389" cy="234" rx="23" ry="17" transform="rotate(39 1391 232)"/><ellipse cx="1388" cy="235" rx="33" ry="25" transform="rotate(39 1391 232)"/><ellipse cx="1387" cy="235" rx="39" ry="30" transform="rotate(39 1391 232)"/><ellipse cx="9" cy="322" rx="19" ry="15" transform="rotate(154 9 322)"/><ellipse cx="9" cy="322" rx="29" ry="23" transform="rotate(154 9 322)"/><ellipse cx="9" cy="322" rx="41" ry="32" transform="rotate(154 9 322)"/><ellipse cx="9" cy="321" rx="42" ry="33" transform="rotate(154 9 322)"/><ellipse cx="9" cy="321" rx="64" ry="51" transform="rotate(154 9 322)"/><ellipse cx="9" cy="321" rx="64" ry="51" transform="rotate(154 9 322)"/><ellipse cx="9" cy="320" rx="68" ry="54" transform="rotate(154 9 322)"/><ellipse cx="1407" cy="342" rx="17" ry="15" transform="rotate(142 1407 342)"/><ellipse cx="1405" cy="344" rx="28" ry="24" transform="rotate(142 1407 342)"/><ellipse cx="1403" cy="345" rx="40" ry="34" transform="rotate(142 1407 342)"/><ellipse cx="1402" cy="347" rx="45" ry="37" transform="rotate(142 1407 342)"/><ellipse cx="1400" cy="349" rx="50" ry="42" transform="rotate(142 1407 342)"/><ellipse cx="1398" cy="350" rx="63" ry="52" transform="rotate(142 1407 342)"/><ellipse cx="1396" cy="352" rx="85" ry="70" transform="rotate(142 1407 342)"/><ellipse cx="-6" cy="451" rx="10" ry="9" transform="rotate(93 -6 451)"/><ellipse cx="-6" cy="453" rx="19" ry="17" transform="rotate(93 -6 451)"/><ellipse cx="-5" cy="455" rx="25" ry="21" transform="rotate(93 -6 451)"/><ellipse cx="-5" cy="457" rx="42" ry="35" transform="rotate(93 -6 451)"/><ellipse cx="1413" cy="453" rx="18" ry="9" transform="rotate(49 1413 453)"/><ellipse cx="1414" cy="451" rx="27" ry="17" transform="rotate(49 1413 453)"/><ellipse cx="1415" cy="450" rx="41" ry="28" transform="rotate(49 1413 453)"/><ellipse cx="1416" cy="448" rx="47" ry="33" transform="rotate(49 1413 453)"/><ellipse cx="14" cy="542" rx="12" ry="11" transform="rotate(16 14 542)"/><ellipse cx="15" cy="541" rx="21" ry="19" transform="rotate(16 14 542)"/><ellipse cx="16" cy="540" rx="27" ry="24" transform="rotate(16 14 542)"/><ellipse cx="17" cy="539" rx="45" ry="38" transform="rotate(16 14 542)"/><ellipse cx="1399" cy="542" rx="14" ry="14" transform="rotate(120 1399 542)"/><ellipse cx="1397" cy="541" rx="24" ry="22" transform="rotate(120 1399 542)"/><ellipse cx="1396" cy="539" rx="35" ry="30" transform="rotate(120 1399 542)"/><ellipse cx="9" cy="671" rx="15" ry="8" transform="rotate(68 9 671)"/><ellipse cx="9" cy="670" rx="24" ry="15" transform="rotate(68 9 671)"/><ellipse cx="10" cy="669" rx="29" ry="19" transform="rotate(68 9 671)"/><ellipse cx="1368" cy="672" rx="19" ry="11" transform="rotate(113 1368 672)"/><ellipse cx="1370" cy="673" rx="29" ry="19" transform="rotate(113 1368 672)"/><ellipse cx="1372" cy="674" rx="38" ry="26" transform="rotate(113 1368 672)"/><ellipse cx="1374" cy="675" rx="41" ry="29" transform="rotate(113 1368 672)"/><ellipse cx="-12" cy="761" rx="11" ry="10" transform="rotate(101 -12 761)"/><ellipse cx="-12" cy="760" rx="18" ry="16" transform="rotate(101 -12 761)"/><ellipse cx="-11" cy="759" rx="26" ry="23" transform="rotate(101 -12 761)"/><ellipse cx="74" cy="750" rx="9" ry="6" transform="rotate(151 74 750)"/><ellipse cx="74" cy="749" rx="16" ry="12" transform="rotate(151 74 750)"/><ellipse cx="75" cy="747" rx="24" ry="18" transform="rotate(151 74 750)"/><ellipse cx="75" cy="745" rx="36" ry="28" transform="rotate(151 74 750)"/><ellipse cx="163" cy="742" rx="19" ry="11" transform="rotate(37 163 742)"/><ellipse cx="161" cy="743" rx="31" ry="20" transform="rotate(37 163 742)"/><ellipse cx="160" cy="743" rx="39" ry="27" transform="rotate(37 163 742)"/><ellipse cx="159" cy="744" rx="51" ry="36" transform="rotate(37 163 742)"/><ellipse cx="157" cy="745" rx="59" ry="43" transform="rotate(37 163 742)"/><ellipse cx="156" cy="746" rx="62" ry="45" transform="rotate(37 163 742)"/><ellipse cx="282" cy="765" rx="13" ry="8" transform="rotate(34 282 765)"/><ellipse cx="281" cy="765" rx="21" ry="15" transform="rotate(34 282 765)"/><ellipse cx="280" cy="765" rx="31" ry="22" transform="rotate(34 282 765)"/><ellipse cx="279" cy="765" rx="39" ry="29" transform="rotate(34 282 765)"/><ellipse cx="278" cy="764" rx="43" ry="33" transform="rotate(34 282 765)"/><ellipse cx="278" cy="764" rx="66" ry="51" transform="rotate(34 282 765)"/><ellipse cx="277" cy="764" rx="63" ry="48" transform="rotate(34 282 765)"/><ellipse cx="362" cy="764" rx="11" ry="8" transform="rotate(26 362 764)"/><ellipse cx="362" cy="766" rx="22" ry="17" transform="rotate(26 362 764)"/><ellipse cx="363" cy="767" rx="33" ry="26" transform="rotate(26 362 764)"/><ellipse cx="364" cy="769" rx="35" ry="27" transform="rotate(26 362 764)"/><ellipse cx="468" cy="752" rx="17" ry="10" transform="rotate(86 468 752)"/><ellipse cx="467" cy="751" rx="28" ry="19" transform="rotate(86 468 752)"/><ellipse cx="467" cy="751" rx="34" ry="23" transform="rotate(86 468 752)"/><ellipse cx="467" cy="750" rx="51" ry="37" transform="rotate(86 468 752)"/><ellipse cx="538" cy="748" rx="19" ry="14" transform="rotate(101 538 748)"/><ellipse cx="538" cy="748" rx="31" ry="24" transform="rotate(101 538 748)"/><ellipse cx="539" cy="747" rx="41" ry="32" transform="rotate(101 538 748)"/><ellipse cx="539" cy="746" rx="49" ry="38" transform="rotate(101 538 748)"/><ellipse cx="615" cy="745" rx="16" ry="11" transform="rotate(136 615 745)"/><ellipse cx="614" cy="744" rx="27" ry="19" transform="rotate(136 615 745)"/><ellipse cx="614" cy="742" rx="34" ry="25" transform="rotate(136 615 745)"/><ellipse cx="613" cy="741" rx="43" ry="32" transform="rotate(136 615 745)"/><ellipse cx="613" cy="740" rx="59" ry="46" transform="rotate(136 615 745)"/><ellipse cx="737" cy="739" rx="10" ry="9" transform="rotate(133 737 739)"/><ellipse cx="737" cy="739" rx="17" ry="14" transform="rotate(133 737 739)"/><ellipse cx="736" cy="740" rx="26" ry="21" transform="rotate(133 737 739)"/><ellipse cx="736" cy="740" rx="38" ry="31" transform="rotate(133 737 739)"/><ellipse cx="796" cy="760" rx="12" ry="8" transform="rotate(24 796 760)"/><ellipse cx="795" cy="762" rx="23" ry="17" transform="rotate(24 796 760)"/><ellipse cx="794" cy="764" rx="33" ry="25" transform="rotate(24 796 760)"/><ellipse cx="793" cy="766" rx="44" ry="34" transform="rotate(24 796 760)"/><ellipse cx="792" cy="767" rx="48" ry="37" transform="rotate(24 796 760)"/><ellipse cx="791" cy="769" rx="59" ry="46" transform="rotate(24 796 760)"/><ellipse cx="790" cy="771" rx="57" ry="44" transform="rotate(24 796 760)"/><ellipse cx="894" cy="743" rx="17" ry="15" transform="rotate(87 894 743)"/><ellipse cx="896" cy="744" rx="26" ry="22" transform="rotate(87 894 743)"/><ellipse cx="898" cy="745" rx="35" ry="29" transform="rotate(87 894 743)"/><ellipse cx="900" cy="747" rx="46" ry="38" transform="rotate(87 894 743)"/><ellipse cx="902" cy="748" rx="63" ry="51" transform="rotate(87 894 743)"/><ellipse cx="904" cy="749" rx="65" ry="53" transform="rotate(87 894 743)"/><ellipse cx="906" cy="751" rx="74" ry="61" transform="rotate(87 894 743)"/><ellipse cx="987" cy="742" rx="19" ry="12" transform="rotate(111 987 742)"/><ellipse cx="987" cy="742" rx="30" ry="21" transform="rotate(111 987 742)"/><ellipse cx="987" cy="741" rx="42" ry="30" transform="rotate(111 987 742)"/><ellipse cx="986" cy="741" rx="53" ry="39" transform="rotate(111 987 742)"/><ellipse cx="986" cy="740" rx="52" ry="38" transform="rotate(111 987 742)"/><ellipse cx="1094" cy="766" rx="20" ry="14" transform="rotate(19 1094 766)"/><ellipse cx="1095" cy="766" rx="31" ry="24" transform="rotate(19 1094 766)"/><ellipse cx="1097" cy="766" rx="42" ry="33" transform="rotate(19 1094 766)"/><ellipse cx="1099" cy="766" rx="56" ry="43" transform="rotate(19 1094 766)"/><ellipse cx="1100" cy="766" rx="62" ry="49" transform="rotate(19 1094 766)"/><ellipse cx="1102" cy="766" rx="76" ry="60" transform="rotate(19 1094 766)"/><ellipse cx="1165" cy="755" rx="17" ry="11" transform="rotate(134 1165 755)"/><ellipse cx="1165" cy="756" rx="28" ry="19" transform="rotate(134 1165 755)"/><ellipse cx="1165" cy="758" rx="33" ry="23" transform="rotate(134 1165 755)"/><ellipse cx="1166" cy="760" rx="46" ry="34" transform="rotate(134 1165 755)"/><ellipse cx="1166" cy="761" rx="64" ry="48" transform="rotate(134 1165 755)"/><ellipse cx="1166" cy="763" rx="52" ry="39" transform="rotate(134 1165 755)"/><ellipse cx="1166" cy="765" rx="67" ry="50" transform="rotate(134 1165 755)"/><ellipse cx="1252" cy="763" rx="12" ry="9" transform="rotate(95 1252 763)"/><ellipse cx="1251" cy="763" rx="21" ry="16" transform="rotate(95 1252 763)"/><ellipse cx="1249" cy="764" rx="31" ry="24" transform="rotate(95 1252 763)"/><ellipse cx="1343" cy="763" rx="19" ry="19" transform="rotate(85 1343 763)"/><ellipse cx="1341" cy="762" rx="31" ry="28" transform="rotate(85 1343 763)"/><ellipse cx="1340" cy="761" rx="35" ry="32" transform="rotate(85 1343 763)"/><ellipse cx="1339" cy="760" rx="53" ry="46" transform="rotate(85 1343 763)"/><ellipse cx="1434" cy="757" rx="15" ry="13" transform="rotate(101 1434 757)"/><ellipse cx="1434" cy="756" rx="27" ry="22" transform="rotate(101 1434 757)"/><ellipse cx="1434" cy="755" rx="35" ry="29" transform="rotate(101 1434 757)"/><ellipse cx="1435" cy="754" rx="40" ry="33" transform="rotate(101 1434 757)"/></g></svg></div>
<!--C-->
<div class="abs" style="left:328px;top:128px;width:1365px;height:100px;background:#f2f2f2;border-radius:4px;box-shadow:0 2px 2px rgba(0,0,0,0.12)"></div>
<div class="abs" style="left:349px;top:149px;width:57px;height:57px;background:#3770a1;border-radius:4px"></div>
<svg class="abs" style="left:349px;top:149px" width="57" height="57" viewBox="0 0 57 57"><ellipse cx="29" cy="23.4" rx="6" ry="6.6" fill="#fff"/><path d="M16.9 38.8 C16.9 33.8 21.4 30.6 29 30.6 C36.6 30.6 41.1 33.8 41.1 38.8 C41.1 40.2 40.4 41 39.2 41 L18.8 41 C17.6 41 16.9 40.2 16.9 38.8 Z" fill="#fff"/></svg>
<div class="t" style="left:416.5px;top:154.0px;font-size:14px;font-weight:400;color:#2d6fd2;letter-spacing:-0.45px">SETUP</div>
<div class="t" style="left:417.0px;top:175.9px;font-size:24px;font-weight:400;color:#3e3e3c;letter-spacing:1.15px;-webkit-text-stroke:0.5px #3e3e3c">Berechtigungssätze</div>
<div class="abs" style="left:328px;top:243px;width:1365px;height:611px;background:#fff;border-radius:4px"></div>
<div class="abs" style="left:0;top:0;width:1708px;height:853px;overflow:hidden">
<div class="t" style="left:398.0px;top:263.7px;font-size:13.4px;font-weight:700;color:#4a4a56;">Berechtigungssatz</div>
<div class="t" style="left:397.0px;top:278.2px;font-size:26.7px;font-weight:400;color:#000;">Interface user</div>
<div class="t" style="left:1502.5px;top:268.6px;font-size:13.5px;font-weight:400;color:#1e5aa6;">Hilfe zu dieser Seite</div>
<svg class="abs" style="left:1629px;top:262px" width="21" height="21" viewBox="0 0 21 21"><defs><radialGradient id="hg" cx="0.4" cy="0.3" r="0.8"><stop offset="0" stop-color="#ffc230"/><stop offset="0.6" stop-color="#eb9400"/><stop offset="1" stop-color="#b86200"/></radialGradient></defs><circle cx="10.3" cy="10.4" r="9.4" fill="url(#hg)"/><path d="M7.4 7.8 C7.4 5.8 8.8 4.8 10.5 4.8 C12.3 4.8 13.6 5.8 13.6 7.4 C13.6 9.4 11.2 9.6 11.2 11.8" fill="none" stroke="#fff" stroke-width="2"/><rect x="10" y="13.6" width="2.3" height="2.3" fill="#fff"/></svg>
<div class="abs" style="left:344px;top:328px;width:1313px;height:45px;background:linear-gradient(#ffffff,#e9e9e9);border-top:1px solid #c4c4c4;border-bottom:1px solid #c4c4c4"></div>
<div class="abs" style="left:350px;top:336px;width:263px;height:29px;background:#fff;border:1px solid #7a7a7a"></div>
<svg class="abs" style="left:358px;top:341px" width="18" height="18" viewBox="0 0 18 18"><circle cx="7.2" cy="7.2" r="4.8" fill="none" stroke="#a8a8a8" stroke-width="2.2"/><line x1="10.6" y1="10.6" x2="15.4" y2="15.4" stroke="#a8a8a8" stroke-width="3" stroke-linecap="round"/></svg>
<div class="t" style="left:381.5px;top:343.2px;font-size:15px;font-weight:400;color:#8a8a8a;">Einstellungen suchen...</div>
<svg class="abs" style="left:587px;top:341px" width="18" height="18" viewBox="0 0 18 18"><circle cx="9" cy="8.4" r="7.6" fill="#cfcfcf"/><path d="M6.2 5.6 L11.8 11.2 M11.8 5.6 L6.2 11.2" stroke="#444" stroke-width="2.2"/></svg>
<div class="abs" style="left:619.5px;top:342px;width:2.5px;height:19px;background:#111"></div>
<div class="abs" style="left:629px;top:337px;width:83px;height:27px;background:linear-gradient(#fefefe,#f1f1f1);border:1px solid #b5b5b5;border-radius:3px"></div>
<div class="t" style="left:634.3px;top:343.8px;font-size:13.4px;font-weight:700;color:#333;">Duplizieren</div>
<div class="abs" style="left:714px;top:337px;width:163px;height:27px;background:linear-gradient(#fefefe,#f1f1f1);border:1px solid #b5b5b5;border-radius:3px"></div>
<div class="t" style="left:719.3px;top:343.7px;font-size:13.5px;font-weight:700;color:#333;">Zuordnungen verwalten</div>
<div class="t" style="left:359.3px;top:399.1px;font-size:17.6px;font-weight:700;color:#000;">Berechtigungssatz-Übersicht</div>
<div class="t" style="right:1139.5px;top:428.8px;font-size:13.5px;font-weight:700;color:#4a4a56;">Beschreibung</div>
<div class="t" style="left:593.5px;top:428.3px;font-size:15px;line-height:17px;color:#000;white-space:normal;width:420px">Permission set with required object and field authorisations<br>for the user who authorises the 'Inxmail Professional Email<br>Marketing for Salesforce' application to communicate with<br>Salesforce.</div>
<div class="t" style="right:483.5px;top:428.6px;font-size:13.5px;font-weight:700;color:#4a4a56;">API-Name</div>
<div class="t" style="left:1249.5px;top:429.5px;font-size:15px;font-weight:400;color:#000;">interface_user</div>
<div class="abs" style="left:344px;top:499px;width:1313px;height:1px;background:#e6e6e6"></div>
<div class="t" style="right:1139.5px;top:503.2px;font-size:13.5px;font-weight:700;color:#4a4a56;">Lizenz</div>
<div class="t" style="right:483.5px;top:503.4px;font-size:13.5px;font-weight:700;color:#4a4a56;">Namespace-Präfix</div>
<div class="t" style="left:1249.5px;top:503.3px;font-size:15px;font-weight:400;color:#000;">inx</div>
<div class="abs" style="left:344px;top:523px;width:1313px;height:1px;background:#e6e6e6"></div>
<div class="t" style="right:1139.5px;top:527.6px;font-size:13.5px;font-weight:700;color:#4a4a56;">Sitzungsaktivierung erforderlich</div>
<div class="abs" style="left:594px;top:527px;width:14px;height:14px;background:linear-gradient(#fbfbfb,#ececec);border:1px solid #c8c8c8;border-radius:3px"></div>
<div class="abs" style="left:344px;top:547px;width:1313px;height:1px;background:#e6e6e6"></div>
<div class="t" style="right:1139.5px;top:551.6px;font-size:13.5px;font-weight:700;color:#4a4a56;">Erstellt von</div>
<svg class="abs" style="left:592px;top:548px" width="90" height="22" viewBox="0 0 90 22"><g fill="none" stroke="#111" stroke-width="1" stroke-linecap="round"><path d="M5 3.5 L7.5 7 M9 11 L6 13.5 L7 16 M10 12 L11 14 M9.5 15.5 L11 13" stroke-dasharray="1.4 1"/><path d="M16.5 7 L17 15 C18 18 21 17.5 22 15 C22.5 12.5 20 11 17.5 12.5"/><path d="M24.5 13 C25 9.5 29 10 31 12 C33 14 30 17 27 16.5 C25 16 25.5 13.5 28 13.2"/><path d="M29.5 6 C31 5 34 6 35 8 C36 10 33.5 12 32 10.5 M33 9 C35 8 38 9 39 12 C40 14 42 15 44 14.5 M35 12.5 C37 12 38 14 38 15.5" stroke-width="1.3"/><path d="M29 18 C32 16.5 35 17 37 18.5 M39 17 L41 18.5" stroke-dasharray="1 1"/><path d="M48 10 L55 17.5 L60.5 12 M55.5 4 L59.5 10" stroke-dasharray="1.6 0.9"/><path d="M66.5 12 C67 15 69 17 71.5 16.5 C73.5 16 74 13.5 72.5 12.5 M74 17 C76 13 77 10 79.5 9 C82 8.5 82.5 12 80.5 14 C82 14.5 83.5 16 82 17.5" stroke-width="1.2"/><path d="M78 18.5 L83 18.5 L86 15.5 L85 19.5" stroke-dasharray="1.2 0.8"/></g><g fill="#111"><circle cx="62.5" cy="3.4" r="0.8"/><circle cx="30" cy="5" r="0.7"/><circle cx="45.5" cy="7" r="0.7"/><rect x="45" y="9.5" width="3" height="1.6"/><rect x="32" y="12" width="4" height="2" opacity="0.7"/><rect x="78" y="10" width="4" height="3" opacity="0.5"/></g></svg>
<div class="t" style="left:677.0px;top:551.6px;font-size:15px;font-weight:400;color:#000;">,</div>
<div class="t" style="left:684.5px;top:551.6px;font-size:15px;font-weight:400;color:#000;">27.06.2018 10:38</div>
<div class="t" style="right:483.5px;top:551.6px;font-size:13.5px;font-weight:700;color:#4a4a56;">Zuletzt geändert von</div>
<div class="t" style="left:1249.5px;top:551.6px;font-size:15px;font-weight:400;color:#000;"><span style="text-decoration:underline">Ulrike Jakob</span>, 27.06.2018 10:38</div>
<div class="abs" style="left:344px;top:602px;width:1311px;height:252px;background:#f8f8f8;border-top:4px solid #222;border-left:1px solid #e3e3e3;border-right:1px solid #e3e3e3;border-radius:4px 4px 0 0"></div>
<div class="t" style="left:360.7px;top:619.2px;font-size:17.5px;font-weight:700;color:#000;">Anwendungen</div>
<div class="abs" style="left:345px;top:651px;width:1309px;height:1px;background:#dcdcdc"></div>
<div class="t" style="left:772.5px;top:675.3px;font-size:15px;font-weight:700;color:#000;text-decoration:underline">Zugewiesene Anwendungen</div>
<div class="t" style="left:772.5px;top:691.6px;font-size:15px;font-weight:400;color:#000;">Einstellungen, die angeben, welche Anwendungen im Anwendungsmenü angezeigt werden</div>
<div class="abs" style="left:773px;top:715px;width:854px;height:1px;background:#9a9a9a"></div>
<div class="t" style="left:772.5px;top:725.3px;font-size:15px;font-weight:700;color:#000;text-decoration:underline">Zugewiesene verbundene Anwendungen</div>
<div class="t" style="left:772.5px;top:741.6px;font-size:15px;font-weight:400;color:#000;">Einstellungen, die angeben, welche verbundenen Anwendungen im Anwendungsmenü angezeigt werden</div>
<div class="abs" style="left:773px;top:765px;width:854px;height:1px;background:#9a9a9a"></div>
<div class="t" style="left:772.5px;top:775.3px;font-size:15px;font-weight:700;color:#000;text-decoration:underline">Objekteinstellungen</div>
<div class="t" style="left:772.5px;top:791.6px;font-size:15px;font-weight:400;color:#000;">Berechtigungen zum Zugreifen auf Objekte und Felder sowie Einstellungen wie Registerkartenverfügbarkeit</div>
<div class="abs" style="left:773px;top:815px;width:854px;height:1px;background:#9a9a9a"></div>
<div class="t" style="left:772.5px;top:825.3px;font-size:15px;font-weight:700;color:#000;text-decoration:underline">Anwendungsberechtigungen</div>
<div class="t" style="left:772.5px;top:841.6px;font-size:15px;font-weight:400;color:#000;">Berechtigungen zum Durchführen anwendungsspezifischer Aktionen wie "Callcenter verwalten"</div>
</div>
<div class="abs" style="left:1657px;top:244px;width:20px;height:609px;background:#f1f1f1"></div>
<div class="abs" style="left:1658px;top:265px;width:17px;height:323.5px;background:#c1c1c1"></div>
<svg class="abs" style="left:1661px;top:252px" width="11" height="7" viewBox="0 0 11 7"><polygon points="0.5,6.2 5.5,1 10.5,6.2" fill="#a3a3a3"/></svg>
<svg class="abs" style="left:1661px;top:837px" width="11" height="7" viewBox="0 0 11 7"><polygon points="0.5,1 5.5,6.2 10.5,1" fill="#505050"/></svg>
<!--/C-->
</body></html>
